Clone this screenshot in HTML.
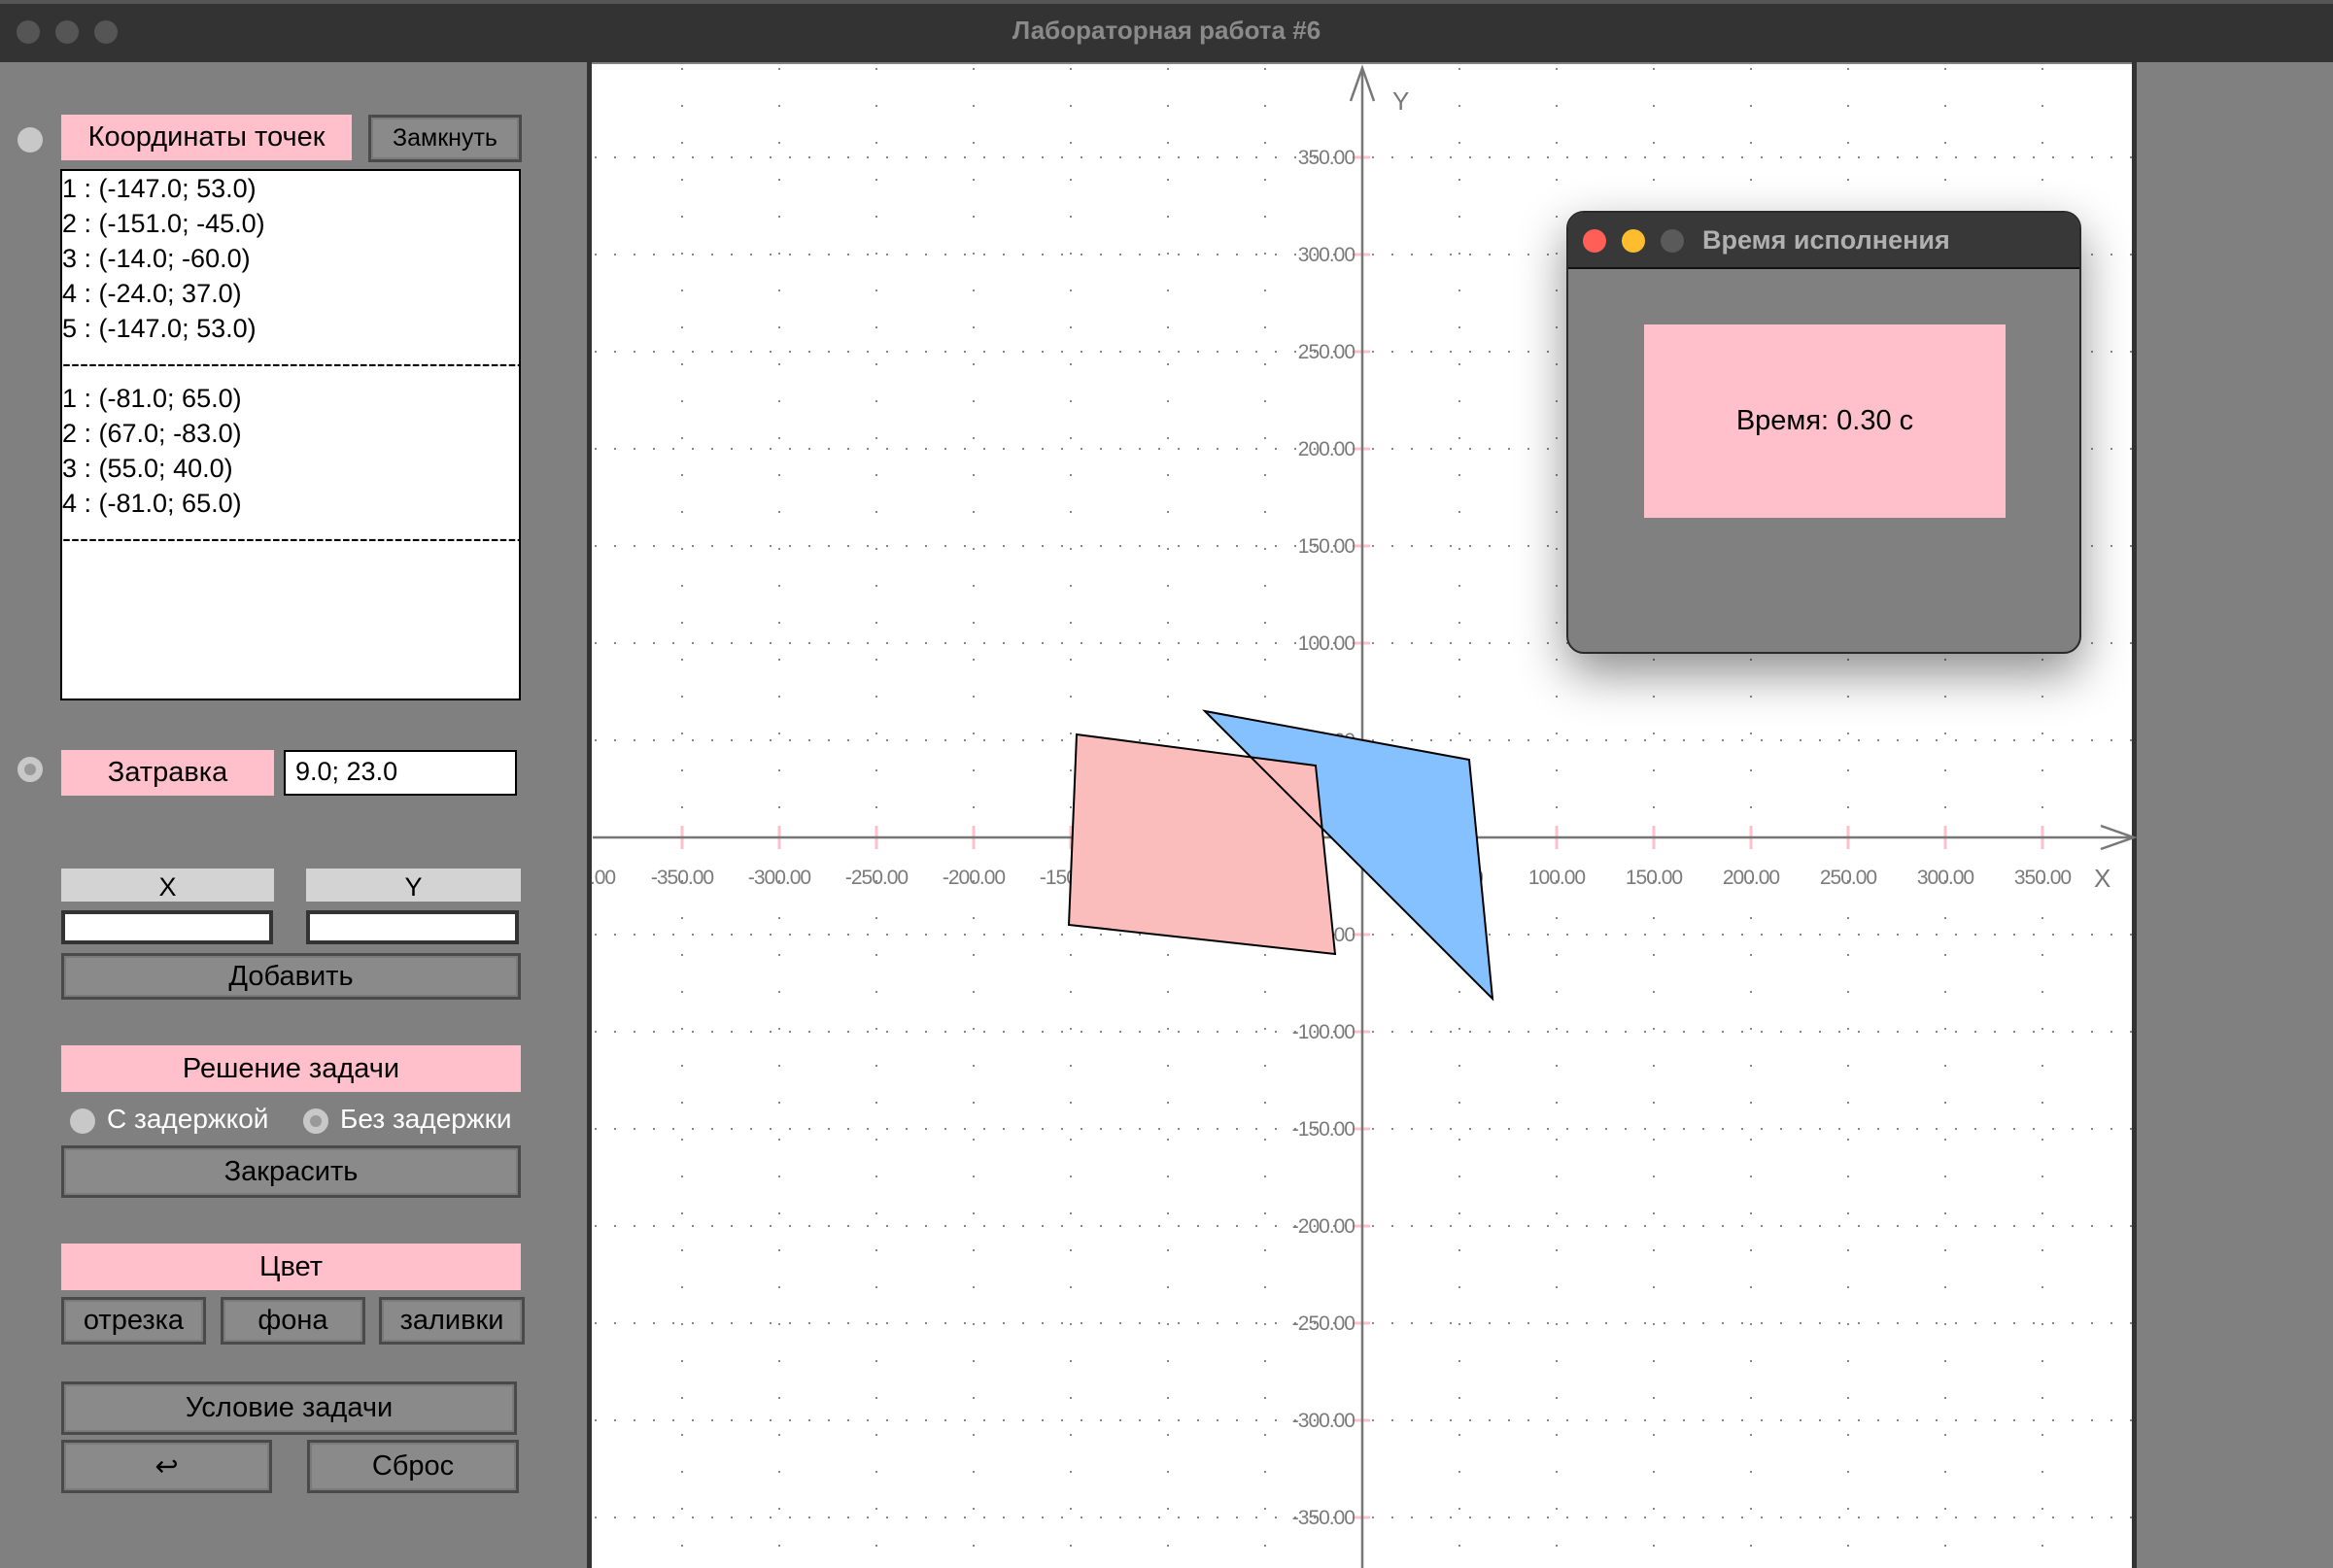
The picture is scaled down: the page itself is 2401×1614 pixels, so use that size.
<!DOCTYPE html>
<html><head><meta charset="utf-8"><style>
body{margin:0;width:2401px;height:1614px;overflow:hidden;background:#808080;font-family:"Liberation Sans",sans-serif;position:relative}
.a{position:absolute;box-sizing:border-box}
.pink{background:#ffc0cb;color:#000;display:flex;align-items:center;justify-content:center;font-size:29px}
.btn{background:#8a8a8a;border:3px solid #4a4a4a;display:flex;align-items:center;justify-content:center;font-size:29px;color:#000;box-shadow:inset 0 0 0 2px #7a7a7a}
.rad{border-radius:50%;background:#c8c8c8;width:26px;height:26px}
</style></head><body>
<div class="a" style="left:0;top:0;width:2401px;height:64px;background:#333;border-top:4px solid #555"></div>
<div class="a rad" style="left:17px;top:21px;width:24px;height:24px;background:#555"></div>
<div class="a rad" style="left:57px;top:21px;width:24px;height:24px;background:#555"></div>
<div class="a rad" style="left:97px;top:21px;width:24px;height:24px;background:#555"></div>
<div class="a" style="left:0;top:16px;width:2401px;text-align:center;color:#8a8a8a;font-weight:bold;font-size:26px">Лабораторная работа #6</div>

<div class="a rad" style="left:18px;top:131px"></div>
<div class="a pink" style="left:63px;top:118px;width:299px;height:47px">Координаты точек</div>
<div class="a btn" style="left:379px;top:118px;width:158px;height:49px;font-size:25px">Замкнуть</div>
<div class="a" style="left:62px;top:174px;width:474px;height:547px;background:#fff;border:2px solid #000;font-size:27px;line-height:36px;padding-top:0;white-space:pre;overflow:hidden">1 : (-147.0; 53.0)
2 : (-151.0; -45.0)
3 : (-14.0; -60.0)
4 : (-24.0; 37.0)
5 : (-147.0; 53.0)
-----------------------------------------------------
1 : (-81.0; 65.0)
2 : (67.0; -83.0)
3 : (55.0; 40.0)
4 : (-81.0; 65.0)
-----------------------------------------------------</div>

<div class="a rad" style="left:18px;top:779px;border:7px solid #c8c8c8;background:#999"></div>
<div class="a pink" style="left:63px;top:772px;width:219px;height:47px">Затравка</div>
<div class="a" style="left:292px;top:772px;width:240px;height:47px;background:#fff;border:2px solid #000;font-size:27px;padding:5px 10px">9.0; 23.0</div>

<div class="a" style="left:63px;top:894px;width:219px;height:34px;background:#d3d3d3;font-size:27px;text-align:center;line-height:38px">X</div>
<div class="a" style="left:315px;top:894px;width:221px;height:34px;background:#d3d3d3;font-size:27px;text-align:center;line-height:38px">Y</div>
<div class="a" style="left:63px;top:937px;width:218px;height:35px;background:#fff;border:4px solid #333"></div>
<div class="a" style="left:315px;top:937px;width:219px;height:35px;background:#fff;border:4px solid #333"></div>
<div class="a btn" style="left:63px;top:981px;width:473px;height:48px">Добавить</div>

<div class="a pink" style="left:63px;top:1076px;width:473px;height:48px">Решение задачи</div>
<div class="a rad" style="left:72px;top:1141px"></div>
<div class="a" style="left:110px;top:1136px;color:#fff;font-size:28px">С задержкой</div>
<div class="a rad" style="left:312px;top:1141px;border:7px solid #c8c8c8;background:#999"></div>
<div class="a" style="left:350px;top:1136px;color:#fff;font-size:28px">Без задержки</div>
<div class="a btn" style="left:63px;top:1179px;width:473px;height:54px">Закрасить</div>

<div class="a pink" style="left:63px;top:1280px;width:473px;height:48px">Цвет</div>
<div class="a btn" style="left:63px;top:1335px;width:149px;height:49px">отрезка</div>
<div class="a btn" style="left:227px;top:1335px;width:149px;height:49px">фона</div>
<div class="a btn" style="left:390px;top:1335px;width:150px;height:49px">заливки</div>
<div class="a btn" style="left:63px;top:1422px;width:469px;height:55px">Условие задачи</div>
<div class="a btn" style="left:63px;top:1482px;width:217px;height:55px">↩</div>
<div class="a btn" style="left:316px;top:1482px;width:218px;height:55px">Сброс</div>

<div class="a" style="left:2196px;top:64px;width:205px;height:1550px;background:#808080"></div>
<svg class="a" style="left:0;top:0" width="2401" height="1614">
<rect x="606" y="66" width="1590" height="1548" fill="#fff"/>
<rect x="604" y="64" width="5" height="1550" fill="#333"/>
<rect x="2194" y="64" width="5" height="1550" fill="#333"/>
<g stroke="#888" stroke-width="2" stroke-dasharray="2 36">
<line x1="702" y1="70" x2="702" y2="1614"/><line x1="802" y1="70" x2="802" y2="1614"/><line x1="902" y1="70" x2="902" y2="1614"/><line x1="1002" y1="70" x2="1002" y2="1614"/><line x1="1102" y1="70" x2="1102" y2="1614"/><line x1="1202" y1="70" x2="1202" y2="1614"/><line x1="1302" y1="70" x2="1302" y2="1614"/><line x1="1502" y1="70" x2="1502" y2="1614"/><line x1="1602" y1="70" x2="1602" y2="1614"/><line x1="1702" y1="70" x2="1702" y2="1614"/><line x1="1802" y1="70" x2="1802" y2="1614"/><line x1="1902" y1="70" x2="1902" y2="1614"/><line x1="2002" y1="70" x2="2002" y2="1614"/><line x1="2102" y1="70" x2="2102" y2="1614"/>
</g>
<g stroke="#888" stroke-width="2" stroke-dasharray="2 18">
<line x1="612" y1="162" x2="2196" y2="162"/><line x1="612" y1="262" x2="2196" y2="262"/><line x1="612" y1="362" x2="2196" y2="362"/><line x1="612" y1="462" x2="2196" y2="462"/><line x1="612" y1="562" x2="2196" y2="562"/><line x1="612" y1="662" x2="2196" y2="662"/><line x1="612" y1="762" x2="2196" y2="762"/><line x1="612" y1="962" x2="2196" y2="962"/><line x1="612" y1="1062" x2="2196" y2="1062"/><line x1="612" y1="1162" x2="2196" y2="1162"/><line x1="612" y1="1262" x2="2196" y2="1262"/><line x1="612" y1="1362" x2="2196" y2="1362"/><line x1="612" y1="1462" x2="2196" y2="1462"/><line x1="612" y1="1562" x2="2196" y2="1562"/>
</g>
<g stroke="#ffc0cb" stroke-width="3">
<line x1="702" y1="850" x2="702" y2="874"/><line x1="802" y1="850" x2="802" y2="874"/><line x1="902" y1="850" x2="902" y2="874"/><line x1="1002" y1="850" x2="1002" y2="874"/><line x1="1102" y1="850" x2="1102" y2="874"/><line x1="1602" y1="850" x2="1602" y2="874"/><line x1="1702" y1="850" x2="1702" y2="874"/><line x1="1802" y1="850" x2="1802" y2="874"/><line x1="1902" y1="850" x2="1902" y2="874"/><line x1="2002" y1="850" x2="2002" y2="874"/><line x1="2102" y1="850" x2="2102" y2="874"/>
<line x1="1394" y1="162" x2="1410" y2="162"/><line x1="1394" y1="262" x2="1410" y2="262"/><line x1="1394" y1="362" x2="1410" y2="362"/><line x1="1394" y1="462" x2="1410" y2="462"/><line x1="1394" y1="562" x2="1410" y2="562"/><line x1="1394" y1="662" x2="1410" y2="662"/><line x1="1394" y1="762" x2="1410" y2="762"/><line x1="1394" y1="962" x2="1410" y2="962"/><line x1="1394" y1="1062" x2="1410" y2="1062"/><line x1="1394" y1="1162" x2="1410" y2="1162"/><line x1="1394" y1="1262" x2="1410" y2="1262"/><line x1="1394" y1="1362" x2="1410" y2="1362"/><line x1="1394" y1="1462" x2="1410" y2="1462"/><line x1="1394" y1="1562" x2="1410" y2="1562"/>
</g>
<g fill="#7a7a7a" font-family="Liberation Sans Narrow, Liberation Sans, sans-serif" font-size="21" letter-spacing="-1">
<g text-anchor="middle"><text x="620" y="910">.00</text><text x="702" y="910">-350.00</text><text x="802" y="910">-300.00</text><text x="902" y="910">-250.00</text><text x="1002" y="910">-200.00</text><text x="1102" y="910">-150.00</text><text x="1202" y="910">-100.00</text><text x="1302" y="910">-50.00</text><text x="1502" y="910">50.00</text><text x="1602" y="910">100.00</text><text x="1702" y="910">150.00</text><text x="1802" y="910">200.00</text><text x="1902" y="910">250.00</text><text x="2002" y="910">300.00</text><text x="2102" y="910">350.00</text></g>
<g text-anchor="end"><text x="1394" y="169">350.00</text><text x="1394" y="269">300.00</text><text x="1394" y="369">250.00</text><text x="1394" y="469">200.00</text><text x="1394" y="569">150.00</text><text x="1394" y="669">100.00</text><text x="1394" y="769">50.00</text><text x="1394" y="969">-50.00</text><text x="1394" y="1069">-100.00</text><text x="1394" y="1169">-150.00</text><text x="1394" y="1269">-200.00</text><text x="1394" y="1369">-250.00</text><text x="1394" y="1469">-300.00</text><text x="1394" y="1569">-350.00</text></g>
</g>
<g stroke="#777" stroke-width="2.5" fill="none">
<line x1="610" y1="862" x2="2196" y2="862"/><line x1="1402" y1="70" x2="1402" y2="1614"/>
<polyline points="2162,850 2196,862 2162,874"/><polyline points="1390,104 1402,70 1414,104"/>
</g>
<text x="2155" y="913" fill="#777" font-size="26">X</text><text x="1433" y="113" fill="#777" font-size="26">Y</text>
<polygon points="1240,732 1536,1028 1512,782" fill="#85c1ff"/>
<polygon points="1108,756 1100,952 1374,982 1354,788" fill="#fbbcbc"/>
<g fill="none" stroke="#000" stroke-width="2"><polygon points="1240,732 1536,1028 1512,782"/><polygon points="1108,756 1100,952 1374,982 1354,788"/></g>
</svg>

<div class="a" style="left:1612px;top:217px;width:530px;height:456px;background:#808080;border:2px solid #2a2a2a;border-radius:18px;overflow:hidden;box-shadow:0 20px 50px rgba(0,0,0,0.45)">
<div class="a" style="left:0;top:0;width:530px;height:58px;background:#383838;border-bottom:2px solid #111"></div>
<div class="a rad" style="left:15px;top:17px;width:24px;height:24px;background:#ff5f57"></div>
<div class="a rad" style="left:55px;top:17px;width:24px;height:24px;background:#febc2e"></div>
<div class="a rad" style="left:95px;top:17px;width:24px;height:24px;background:#5a5a5a"></div>
<div class="a" style="left:138px;top:13px;color:#b0b0b0;font-weight:bold;font-size:27px">Время исполнения</div>
<div class="a pink" style="left:78px;top:115px;width:372px;height:199px;font-size:29px">Время: 0.30 с</div>
</div>
</body></html>
